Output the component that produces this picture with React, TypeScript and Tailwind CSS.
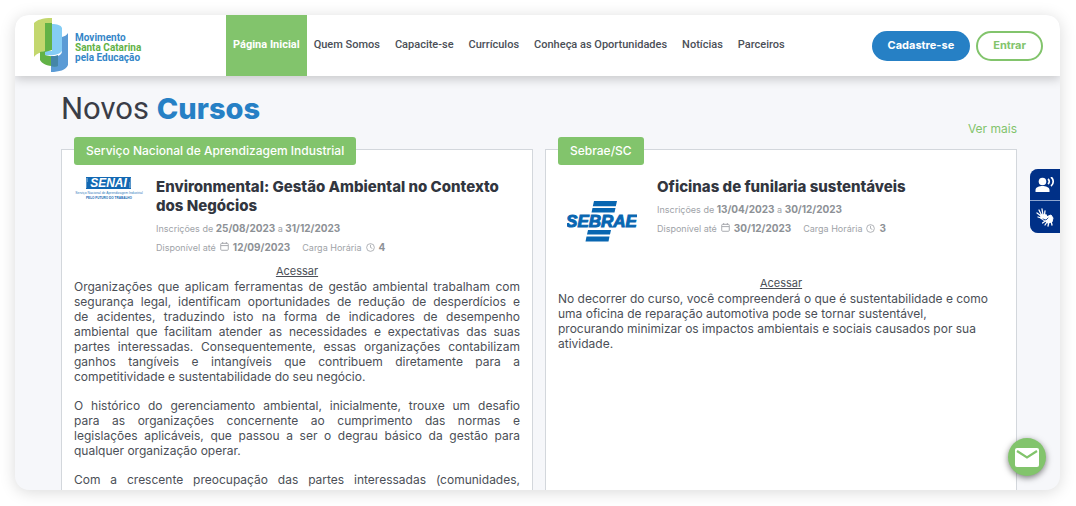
import React from "react";

const navItems = ["Quem Somos", "Capacite-se", "Currículos", "Conheça as Oportunidades", "Notícias", "Parceiros"];

function BrandLogo() {
  return (
    <a href="#inicio" className="flex w-[192px] items-center gap-[7px] font-[Roboto,sans-serif]">
      <svg viewBox="0 0 34 55" className="h-[55px] w-[34px]" aria-hidden="true">
        <path d="M28 19c3-1 5-2 6-4v32c-2 5-9 7-17 7V48h7V38c2-1 4-2 4-5z" fill="#5b9bd5" />
        <path d="M0 5C3 2 8 0 18 0v32C9 33 3 35 0 39z" fill="#c3d76e" />
        <path d="M6 34l5-1v4c4 1 9 2 13 1v10C15 49 8 46 6 42z" fill="#62b246" />
        <path d="M11 33h7V6c5 0 9 1 10 4v23c-3 4-10 5-17 4z" fill="#85cdf5" />
        <path d="M11 5h7v27l-7 2z" fill="#62b246" />
        <path d="M17 38c3 0 5 0 7-1v11c-2 1-5 1-7 0z" fill="#4586a8" />
      </svg>
      <span className="flex flex-col pt-1 text-[10px] leading-[10px] font-bold text-[#3486c8]">
        <span>Movimento</span>
        <span className="text-[#62b246]">Santa Catarina</span>
        <span>pela Educação</span>
      </span>
    </a>
  );
}

function SenaiLogo() {
  return (
    <svg viewBox="0 0 70 24" className="h-6 w-[70px]" role="img" aria-label="SENAI">
      <rect x="12" y="0" width="45" height="12" fill="#1268b3" />
      <path d="M12 2h2M12 4h2M12 6h1M12 8h1M12 10h1M56 2h1M56 4h1M55 6h2M55 8h2M55 10h2" stroke="#fff" strokeWidth=".6" />
      <text x="34.500" y="10.300" textAnchor="middle" fontSize="12" fontWeight="700" fontStyle="italic" fontFamily="Liberation Sans" fill="#fff">SENAI</text>
      <text x="35" y="16.500" textAnchor="middle" fontSize="3.400" fontFamily="Liberation Sans" fill="#3580c0">Serviço Nacional de Aprendizagem Industrial</text>
      <text x="35" y="21.500" textAnchor="middle" fontSize="3.100" fontWeight="700" fontFamily="Liberation Sans" fill="#1268b3">PELO FUTURO DO TRABALHO</text>
    </svg>
  );
}

function SebraeLogo() {
  return (
    <svg viewBox="0 0 70 41" className="h-[41px] w-[70px]" role="img" aria-label="SEBRAE">
      <g fill="#0866b1">
        <path d="M27 0h23l-1.200 5.300h-23zM25.500 7h23l-1 4.500h-23zM21 29h23l-1 4.500H20zM19.500 35.500h23l-1 5h-23z" />
        <text x="34.500" y="26" textAnchor="middle" fontSize="17" fontWeight="700" fontStyle="italic" fontFamily="Liberation Sans" stroke="#0866b1" strokeWidth="1">SEBRAE</text>
      </g>
    </svg>
  );
}

function CalendarIcon() {
  return (
    <svg viewBox="0 0 10 10" className="mx-1 inline h-[9px] w-[9px] align-[0px]" fill="none" stroke="currentColor" aria-hidden="true">
      <rect x=".8" y="1.500" width="8.400" height="7.700" rx="1" />
      <path d="M1 4h8M3 0v2M7 0v2" />
    </svg>
  );
}

function ClockIcon() {
  return (
    <svg viewBox="0 0 10 10" className="mx-1 inline h-[9px] w-[9px] align-[-1px]" fill="none" stroke="currentColor" strokeWidth=".9" aria-hidden="true">
      <circle cx="5" cy="5" r="4.300" />
      <path d="M5 2v3l2 1" />
    </svg>
  );
}

function Strong({ children }: { children: React.ReactNode }) {
  return <b className="text-[10px] text-[#8d9196]">{children}</b>;
}

type CourseProps = {
  provider: string;
  title: string;
  start: string;
  end: string;
  available: string;
  hours: number;
  logo: React.ReactNode;
  justified?: boolean;
  paragraphs: string[][];
};

function CourseCard({ provider, title, start, end, available, hours, logo, justified, paragraphs }: CourseProps) {
  return (
    <article className="relative border border-[#d3d7dc] bg-white px-3 pt-[27px] pb-6">
      <span className="absolute -top-[13px] left-3 rounded-[3px] bg-[#82c46c] px-3 py-1 text-[12px] leading-5 font-medium text-white">{provider}</span>
      <div className={justified ? "flex min-h-[86px] gap-3" : "flex min-h-[98px] gap-3"}>
        <div className={justified ? "w-[70px] shrink-0" : "flex w-[87px] shrink-0 justify-center pt-6"}>{logo}</div>
        <div>
          <h3 className="text-[15px] leading-[19px] font-extrabold text-[#32363f]">{title}</h3>
          <p className="mt-1 text-[9px] leading-[18px] text-[#a0a3a8]">
            Inscrições de <Strong>{start}</Strong> a <Strong>{end}</Strong>
            <br />
            Disponível até
            <CalendarIcon />
            <Strong>{available}</Strong>
            <span className="ml-3">Carga Horária</span>
            <ClockIcon />
            <Strong>{hours}</Strong>
          </p>
        </div>
      </div>
      <div className="text-center text-[11px] leading-4">
        <a href="#acessar" className="underline">Acessar</a>
      </div>
      <div className="flex flex-col gap-[14px] text-[12px] leading-[15px]">
        {paragraphs.map((lines, index) => (
          <p key={index}>
            {lines.map((line) => (
              <span key={line} className={justified && !line.endsWith(".") ? "block text-justify [text-align-last:justify]" : "block"}>
                {line}{" "}
              </span>
            ))}
          </p>
        ))}
      </div>
    </article>
  );
}

export default function App() {
  return (
    <div className="h-screen bg-white pt-[15px] pr-4 pb-4 pl-[15px] font-[Inter,sans-serif] text-[#4b4f57]">
      <div className="relative flex h-full flex-col overflow-hidden rounded-[14px] bg-[#f6f7fa] shadow-[0_2px_16px_rgba(0,0,0,0.15)]">
        <header className="z-10 flex h-[61px] shrink-0 items-center bg-white pr-[17px] pl-[19px] shadow-[0_3px_10px_rgba(0,0,0,0.2)]">
          <BrandLogo />
          <nav className="flex h-full items-center gap-[15px] font-[Roboto,sans-serif] text-[11px] font-medium">
            <a href="#inicio" className="-mr-2 flex h-full items-center bg-[#82c46c] px-[7px] font-bold text-white">Página Inicial</a>
            {navItems.map((item) => (
              <a key={item} href="#secao" className="whitespace-nowrap">{item}</a>
            ))}
          </nav>
          <div className="ml-auto flex gap-[6px] text-[11px] font-bold">
            <button type="button" className="h-[30px] rounded-full bg-[#2680c5] px-4 text-white">Cadastre-se</button>
            <button type="button" className="h-[30px] rounded-full border-2 border-[#82c46c] bg-white px-[15px] text-[#82c46c]">Entrar</button>
          </div>
        </header>

        <main className="pr-[43px] pl-[46px]">
          <div className="flex items-end justify-between pt-[11px]">
            <h1 className="font-[Roboto,sans-serif] text-[31px] leading-[44px] text-[#3a3d47]">
              Novos <strong className="font-[Inter,sans-serif] text-[29px] font-extrabold text-[#2680c5]">Cursos</strong>
            </h1>
            <a href="#mais" className="-mb-2 text-[12px] leading-5 text-[#82c46c]">Ver mais</a>
          </div>
          <div className="mt-[18px] grid grid-cols-2 gap-3">
            <CourseCard
              provider="Serviço Nacional de Aprendizagem Industrial"
              title="Environmental: Gestão Ambiental no Contexto dos Negócios"
              start="25/08/2023"
              end="31/12/2023"
              available="12/09/2023"
              hours={4}
              logo={<SenaiLogo />}
              justified
              paragraphs={[
                [
                  "Organizações que aplicam ferramentas de gestão ambiental trabalham com",
                  "segurança legal, identificam oportunidades de redução de desperdícios e",
                  "de acidentes, traduzindo isto na forma de indicadores de desempenho",
                  "ambiental que facilitam atender as necessidades e expectativas das suas",
                  "partes interessadas. Consequentemente, essas organizações contabilizam",
                  "ganhos tangíveis e intangíveis que contribuem diretamente para a",
                  "competitividade e sustentabilidade do seu negócio.",
                ],
                [
                  "O histórico do gerenciamento ambiental, inicialmente, trouxe um desafio",
                  "para as organizações concernente ao cumprimento das normas e",
                  "legislações aplicáveis, que passou a ser o degrau básico da gestão para",
                  "qualquer organização operar.",
                ],
                ["Com a crescente preocupação das partes interessadas (comunidades,"],
              ]}
            />
            <CourseCard
              provider="Sebrae/SC"
              title="Oficinas de funilaria sustentáveis"
              start="13/04/2023"
              end="30/12/2023"
              available="30/12/2023"
              hours={3}
              logo={<SebraeLogo />}
              paragraphs={[
                [
                  "No decorrer do curso, você compreenderá o que é sustentabilidade e como",
                  "uma oficina de reparação automotiva pode se tornar sustentável,",
                  "procurando minimizar os impactos ambientais e sociais causados por sua",
                  "atividade.",
                ],
              ]}
            />
          </div>
        </main>

        <div className="absolute top-[154px] right-0 flex w-[30px] flex-col gap-px overflow-hidden rounded-l-lg bg-[#8fa6d0]">
          <button type="button" aria-label="Ouvir conteúdo" className="flex h-[31px] items-center justify-center bg-[#003087]">
            <svg viewBox="0 0 20 16" className="h-4 w-5" fill="#fff" aria-hidden="true">
              <circle cx="7.500" cy="4.500" r="3.800" />
              <path d="M.5 15v-2c0-3 4-4 7-4s7 1 7 4v2z" />
              <path d="M13 2c1.700 1.500 1.700 3.500 0 5M16 0c3 2.500 3 6.500 0 9" fill="none" stroke="#fff" strokeWidth="1.700" />
            </svg>
          </button>
          <button type="button" aria-label="Libras" className="flex h-8 items-center justify-center bg-[#003087]">
            <svg viewBox="0 0 18 19" className="h-[19px] w-[18px]" fill="none" stroke="#fff" strokeLinecap="round" aria-hidden="true">
              <path d="M5 7l5 0 1 3-3 2-3-2z" fill="#fff" strokeWidth="1.500" />
              <path d="M5 8L1 5M5.500 7L3 2M7 7L6 1M8.500 7L9 3M5 10l-3-1" strokeWidth="1.300" />
              <path d="M10 9l5-2 2 3-1 4-5 1-2-3z" fill="#fff" />
              <path d="M9.500 13l-3 2M11 14l-2 3M13 14l-1 4M15 13l1 4" strokeWidth="1.300" />
              <path d="M7 11l3 1 2-2" stroke="#003087" strokeWidth=".8" />
            </svg>
          </button>
        </div>
        <button type="button" aria-label="Enviar mensagem" className="absolute right-[14px] bottom-[14px] flex size-[38px] items-center justify-center rounded-full bg-[#82c46c] shadow-[0_2px_6px_rgba(0,0,0,0.5)]">
          <svg viewBox="0 0 24 19" className="h-[19px] w-6" aria-hidden="true">
            <rect width="24" height="19" rx="2" fill="#fff" />
            <path d="M2 3l10 6.500L22 3" fill="none" stroke="#82c46c" strokeWidth="2.200" />
          </svg>
        </button>
      </div>
    </div>
  );
}
